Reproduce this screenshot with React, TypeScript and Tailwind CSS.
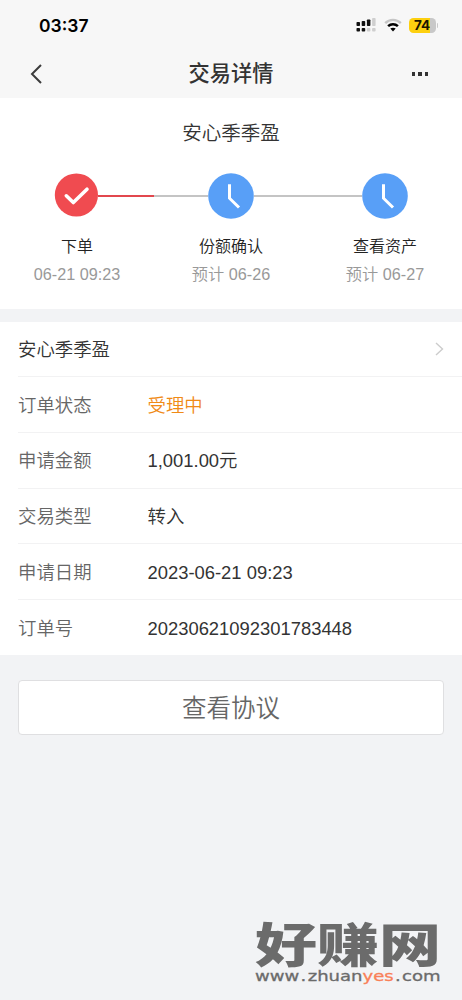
type Step = {
  title: string;
  time: string;
  done: boolean;
};

type Detail = {
  label: string;
  value: string;
  highlight?: boolean;
};

const steps: Step[] = [
  { title: "下单", time: "06-21 09:23", done: true },
  { title: "份额确认", time: "预计 06-26", done: false },
  { title: "查看资产", time: "预计 06-27", done: false },
];

const details: Detail[] = [
  { label: "订单状态", value: "受理中", highlight: true },
  { label: "申请金额", value: "1,001.00元" },
  { label: "交易类型", value: "转入" },
  { label: "申请日期", value: "2023-06-21 09:23" },
  { label: "订单号", value: "20230621092301783448" },
];

function StatusBar() {
  return (
    <div className="flex h-[50px] items-center justify-between pr-[24px] pl-[39px]">
      <span className="pt-px font-['Inter','Liberation_Sans',sans-serif] text-[17.5px] leading-[24px] font-semibold text-black">
        03:37
      </span>
      <div className="flex items-center">
        {/* dual sim signal */}
        <svg width="20" height="16" viewBox="0 0 20 16" className="mr-[8px]">
          <g fill="#111">
            <rect x="0.5" y="5" width="3.5" height="4" rx="0.8" />
            <rect x="5.7" y="4" width="3.5" height="5" rx="0.8" />
            <rect x="10.9" y="2.5" width="3.5" height="6.5" rx="0.8" />
            <rect x="0.5" y="11" width="3.5" height="3.5" rx="0.8" />
            <rect x="5.7" y="11" width="3.5" height="3.5" rx="0.8" />
          </g>
          <g fill="#cfcfcf">
            <rect x="16.1" y="1" width="3.5" height="8" rx="0.8" />
            <rect x="10.9" y="11" width="3.5" height="3.5" rx="0.8" />
            <rect x="16.1" y="11" width="3.5" height="3.5" rx="0.8" />
          </g>
        </svg>
        <svg width="18" height="14" viewBox="0 0 18 14" fill="none" className="mr-[7px]">
          <path d="M1.2 5.2C5.6 0.8 12.4 0.8 16.8 5.2" stroke="#c6c6c6" strokeWidth="2.4" />
          <path d="M4.1 8.2C6.9 5.5 11.1 5.5 13.9 8.2" stroke="#000" strokeWidth="2.5" />
          <path d="M9 13.4L6.3 10.6C7.8 9.3 10.2 9.3 11.7 10.6Z" fill="#000" />
        </svg>
        <div className="flex h-[15px] w-[27px] items-center justify-center rounded-[4.5px] bg-linear-to-r from-[#fdd00f] from-76% to-[#c8c8c8] to-76%">
          <span className="font-['Inter','Liberation_Sans',sans-serif] text-[13.5px] leading-[15px] font-bold text-[#1a1500]">
            74
          </span>
        </div>
        <div className="ml-px h-[5px] w-[1.5px] rounded-r-full bg-[#c8c8c8]" />
      </div>
    </div>
  );
}

function NavBar() {
  return (
    <div className="grid h-[48px] grid-cols-[1fr_auto_1fr] items-center pr-[34px] pl-[34px]">
      <svg
        width="13"
        height="20"
        viewBox="0 0 13 20"
        fill="none"
        stroke="#3c3c3c"
        strokeWidth="2"
        className="-ml-[4px]"
      >
        <path d="M11 1L2 10L11 19" />
      </svg>
      <h1 className="text-[21.2px] leading-[30px] font-medium text-[#333]">交易详情</h1>
      <div className="flex justify-end gap-[3px]">
        <i className="size-[3.5px] bg-[#333]" />
        <i className="size-[3.5px] bg-[#333]" />
        <i className="size-[3.5px] bg-[#333]" />
      </div>
    </div>
  );
}

function StepIcon({ done }: { done: boolean }) {
  if (done) {
    return (
      <svg width="44" height="44" viewBox="0 0 44 44" fill="none">
        <circle cx="22.4" cy="22" r="21.6" fill="#f04b50" />
        <path
          d="M12.3 22.8L19.3 29.5L33 16.2"
          stroke="#fff"
          strokeWidth="3.6"
          strokeLinecap="round"
          strokeLinejoin="round"
        />
      </svg>
    );
  }
  return (
    <svg width="46" height="46" viewBox="0 0 46 46" fill="none">
      <circle cx="23" cy="23" r="22.8" fill="#589ff7" />
      <path d="M21.5 11.3V25.2L31 34.5" stroke="#fff" strokeWidth="3" />
    </svg>
  );
}

function Progress() {
  return (
    <section className="h-[211px] bg-white pt-[21px]">
      <h2 className="text-center text-[19.5px] leading-[28px] text-[#333]">安心季季盈</h2>
      <div className="mt-[26px] flex h-[46px] items-center pr-[54px] pl-[54px]">
        <div className="mb-[2px] flex">
          <StepIcon done={steps[0].done} />
        </div>
        <div className="h-[2px] w-[56px] bg-[#e2474e]" />
        <div className="h-[2px] flex-1 bg-[#c4c4c4]" />
        <StepIcon done={steps[1].done} />
        <div className="h-[2px] w-[108px] bg-[#c4c4c4]" />
        <StepIcon done={steps[2].done} />
      </div>
      <div className="mt-[16px] grid grid-cols-3">
        {steps.map((step) => (
          <div key={step.title} className="text-center whitespace-nowrap">
            <p className="text-[16px] leading-[24px] text-[#222]">{step.title}</p>
            <p className="mt-[3px] text-[16.2px] leading-[24px] text-[#999]">{step.time}</p>
          </div>
        ))}
      </div>
    </section>
  );
}

function DetailList() {
  return (
    <section className="mt-[13px] h-[333px] bg-white pl-[18px] text-[18.4px]">
      <div className="flex h-[55.3px] items-center justify-between border-b border-[#f2f2f3] pr-[18px]">
        <span className="pt-[2px] text-[#333]">安心季季盈</span>
        <svg width="9" height="14" viewBox="0 0 9 14" fill="none" stroke="#ccc" strokeWidth="1.4">
          <path d="M1 1L7.5 7L1 13" />
        </svg>
      </div>
      {details.map((item) => (
        <div
          key={item.label}
          className="flex h-[55.7px] items-center border-b border-[#f2f2f3] pt-[1.5px] last:border-b-0 last:pt-px"
        >
          <span className="w-[129.5px] text-[#666]">{item.label}</span>
          <span className={item.highlight ? "text-[#f08a16]" : "text-[#333]"}>{item.value}</span>
        </div>
      ))}
    </section>
  );
}

function Watermark() {
  return (
    <div className="absolute top-[916px] left-[255px] w-[186px] text-[#6b6b6b]">
      <div className="h-[52px] origin-left scale-x-[1.32] font-['Noto_Sans_CJK_SC',sans-serif] text-[47px] leading-[52px] font-black whitespace-nowrap">
        好赚网
      </div>
      <div className="flex h-[16px] origin-left scale-x-[1.29] items-center font-['DejaVu_Sans',sans-serif] text-[14px] leading-[16px] font-normal whitespace-nowrap [-webkit-text-stroke:0.3px]">
        <span>www</span>
        <span className="px-[1px]">.</span>
        <span>zhuan</span>
        <span className="text-[#f98058]">yes</span>
        <span className="px-[1px]">.</span>
        <span>com</span>
      </div>
    </div>
  );
}

export default function App() {
  return (
    <div className="relative h-[1000px] w-[462px] overflow-hidden bg-[#f2f3f5] font-['Liberation_Sans','Noto_Sans_CJK_SC',sans-serif] font-[350]">
      <header className="h-[98px] bg-[#f7f7f7]">
        <StatusBar />
        <NavBar />
      </header>
      <Progress />
      <DetailList />
      <div className="px-[18px] pt-[25px]">
        <button className="flex h-[55px] w-full items-center justify-center rounded-[4px] border border-[#dfdfe1] bg-white pt-[3px] text-[24.5px] text-[#666]">
          查看协议
        </button>
      </div>
      <Watermark />
    </div>
  );
}
